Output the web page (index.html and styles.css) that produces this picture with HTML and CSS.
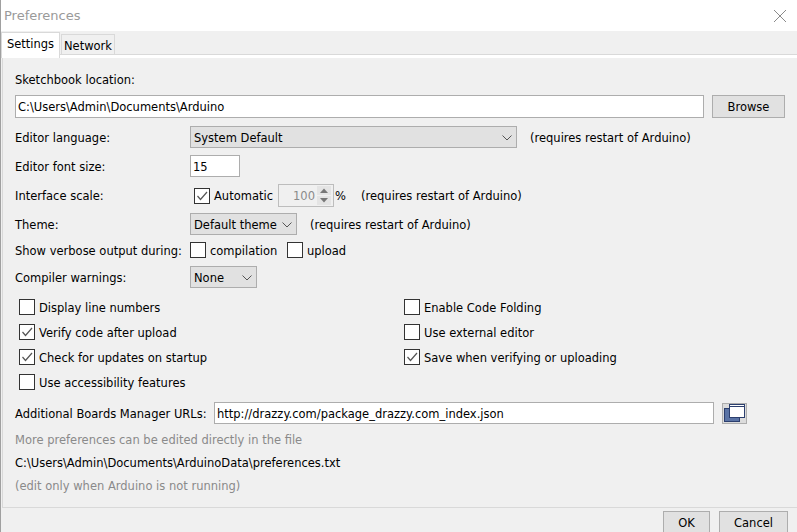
FILE: index.html
```html
<!DOCTYPE html>
<html lang="en">

<head>
  <meta charset="UTF-8">
  <title>Preferences</title>
  <link rel="stylesheet" href="styles.css">
</head>

<body>
  <div class="window">
    <header class="title-bar">
      <span class="title">Preferences</span>
      <svg class="close" width="14" height="14" viewBox="0 0 14 14"><path d="M1 1 13 13M13 1 1 13" stroke="#8a8a8a" fill="none"/></svg>
    </header>

    <nav class="tabs">
      <span class="tab active">Settings</span>
      <span class="tab">Network</span>
    </nav>

    <main class="panel">
      <div class="row row-sketch-label"><span>Sketchbook location:</span></div>

      <div class="row row-sketch">
        <div class="field field-sketch">C:\Users\Admin\Documents\Arduino</div>
        <div class="button button-browse">Browse</div>
      </div>

      <div class="row row-lang">
        <span class="label">Editor language:</span>
        <div class="select select-lang">System Default
          <svg class="chevron" width="10" height="6" viewBox="0 0 10 6"><path d="M.5.5 5 5 9.500.5" stroke="#555" fill="none"/></svg>
        </div>
        <span class="note note-lang">(requires restart of Arduino)</span>
      </div>

      <div class="row row-size">
        <span class="label">Editor font size:</span>
        <div class="field field-size">15</div>
      </div>

      <div class="row row-scale">
        <span class="label">Interface scale:</span>
        <span class="box box-auto"><svg width="14" height="14" viewBox="0 0 14 14"><path d="M2.500 7 5.500 10.500 12 3" stroke="#555" stroke-width="1.200" fill="none"/></svg></span>
        <span class="check-text auto-text">Automatic</span>
        <div class="spinner">
          <span class="spinner-value">100</span>
          <span class="spinner-arrows">
            <svg width="14" height="9" viewBox="0 0 14 9"><rect width="14" height="9" fill="#e4e4e4"/><path d="M3 7 7 2.500 11 7Z" fill="#777"/></svg>
            <svg width="14" height="9" viewBox="0 0 14 9"><rect width="14" height="9" fill="#e4e4e4"/><path d="M3 2 7 6.500 11 2Z" fill="#777"/></svg>
          </span>
        </div>
        <span class="percent">%</span>
        <span class="note">(requires restart of Arduino)</span>
      </div>

      <div class="row row-theme">
        <span class="label">Theme:</span>
        <div class="select select-theme">Default theme
          <svg class="chevron" width="10" height="6" viewBox="0 0 10 6"><path d="M.5.5 5 5 9.500.5" stroke="#555" fill="none"/></svg>
        </div>
        <span class="note note-theme">(requires restart of Arduino)</span>
      </div>

      <div class="row row-verbose">
        <span class="label">Show verbose output during:</span>
        <span class="box"></span>
        <span class="check-text verbose-text">compilation</span>
        <span class="box"></span>
        <span class="check-text">upload</span>
      </div>

      <div class="row row-warn">
        <span class="label">Compiler warnings:</span>
        <div class="select select-warn">None
          <svg class="chevron" width="10" height="6" viewBox="0 0 10 6"><path d="M.5.5 5 5 9.500.5" stroke="#555" fill="none"/></svg>
        </div>
      </div>

      <div class="options">
        <div class="option"><span class="box"></span><span class="check-text">Display line numbers</span></div>
        <div class="option"><span class="box"></span><span class="check-text">Enable Code Folding</span></div>
        <div class="option"><span class="box"><svg width="14" height="14" viewBox="0 0 14 14"><path d="M2.500 7 5.500 10.500 12 3" stroke="#555" stroke-width="1.200" fill="none"/></svg></span><span class="check-text">Verify code after upload</span></div>
        <div class="option"><span class="box"></span><span class="check-text">Use external editor</span></div>
        <div class="option"><span class="box"><svg width="14" height="14" viewBox="0 0 14 14"><path d="M2.500 7 5.500 10.500 12 3" stroke="#555" stroke-width="1.200" fill="none"/></svg></span><span class="check-text">Check for updates on startup</span></div>
        <div class="option"><span class="box"><svg width="14" height="14" viewBox="0 0 14 14"><path d="M2.500 7 5.500 10.500 12 3" stroke="#555" stroke-width="1.200" fill="none"/></svg></span><span class="check-text">Save when verifying or uploading</span></div>
        <div class="option"><span class="box"></span><span class="check-text">Use accessibility features</span></div>
      </div>

      <div class="row row-urls">
        <span class="urls-label">Additional Boards Manager URLs:</span>
        <div class="field field-urls">http://drazzy.com/package_drazzy.com_index.json</div>
        <div class="icon-button">
          <svg width="21" height="18" viewBox="0 0 21 18">
            <rect x=".5" y="4.500" width="15" height="13" fill="#5a73a5" stroke="#2c3f6e"/>
            <rect x="5.500" y=".5" width="15" height="13" fill="#fff" stroke="#2c3f6e"/>
            <path d="M6 2.500H20" stroke="#2c3f6e"/>
          </svg>
        </div>
      </div>

      <p class="hint hint-first">More preferences can be edited directly in the file</p>
      <p class="path">C:\Users\Admin\Documents\ArduinoData\preferences.txt</p>
      <p class="hint hint-last">(edit only when Arduino is not running)</p>
    </main>

    <footer class="actions">
      <div class="button button-ok">OK</div>
      <div class="button button-cancel">Cancel</div>
    </footer>
  </div>
</body>

</html>
```

FILE: styles.css
```css
body {
  margin: 0;
  font-family: "DejaVu Sans", sans-serif;
  font-size: 11.5px;
  color: #000;
  background-color: #f0f0f0;
  overflow: hidden;
  white-space: nowrap;
}

.window {
  height: 532px;
  overflow: hidden;
  border-left: 1px solid #a0a0a0;
  box-sizing: border-box;
}

.title-bar {
  height: 31px;
  background-color: #fff;
  display: flex;
  align-items: center;
  justify-content: space-between;
  padding: 0 10px 0 3px;
}

.title {
  font-size: 13px;
  color: #9a9a9a;
}

.tabs {
  height: 23px;
  display: flex;
  align-items: flex-end;
  border-bottom: 1px solid #d9d9d9;
  box-sizing: content-box;
}

.tab {
  height: 20px;
  line-height: 22px;
  width: 54px;
  margin-left: 1px;
  text-align: center;
  box-sizing: border-box;
  border: 1px solid #d9d9d9;
  border-bottom: none;
  background-color: #f0f0f0;
}

.tab.active {
  width: 59px;
  height: 26px;
  margin-left: 0;
  margin-bottom: -4px;
  line-height: 22px;
  background-color: #fff;
  position: relative;
}

.panel {
  height: 453px;
  box-sizing: border-box;
  margin-left: 1px;
  padding: 15px 0 0 12px;
  border-top: 3px solid #fff;
  border-left: 1px solid #d9d9d9;
  border-bottom: 1px solid #d9d9d9;
}

.row {
  display: flex;
  align-items: center;
}

.row-sketch-label { height: 14px; margin-bottom: 8px; }
.row-sketch { height: 23px; margin-bottom: 8px; }
.row-lang { height: 22px; margin-bottom: 7px; }
.row-size { height: 22px; margin-bottom: 7px; }
.row-scale { height: 23px; margin-bottom: 6px; }
.row-theme { height: 22px; margin-bottom: 7px; }
.row-verbose { height: 16px; margin-bottom: 8px; }
.row-warn { height: 22px; margin-bottom: 11px; }
.row-urls { height: 22px; margin-bottom: 9px; }

.label {
  width: 175px;
  flex-shrink: 0;
  padding-top: 2px;
}

.field {
  height: 100%;
  box-sizing: border-box;
  background-color: #fff;
  border: 1px solid #adadad;
  padding-left: 2px;
  display: flex;
  align-items: center;
}

.field-sketch { width: 689px; }
.field-size { width: 50px; height: 22px; padding-top: 2px; }
.field-urls { width: 500px; padding-top: 2px; }

.button {
  box-sizing: border-box;
  border: 1px solid #adadad;
  background-color: #e1e1e1;
  display: flex;
  align-items: center;
  justify-content: center;
}

.button-browse {
  width: 73px;
  height: 23px;
  margin-left: 8px;
}

.select {
  height: 22px;
  box-sizing: border-box;
  border: 1px solid #adadad;
  background-color: #e1e1e1;
  padding: 2px 4px 0 3px;
  display: flex;
  align-items: center;
  justify-content: space-between;
}

.select-lang { width: 327px; }
.select-theme { width: 107px; }
.select-warn { width: 67px; }

.note { padding-top: 2px; }
.note-lang { margin-left: 13px; }
.note-theme { margin-left: 13px; }

.box {
  width: 16px;
  height: 16px;
  box-sizing: border-box;
  border: 1px solid #333;
  background-color: #fff;
  flex-shrink: 0;
  display: flex;
}

.box-auto { margin-left: 4px; }

.check-text {
  margin-left: 4px;
  padding-top: 2px;
}

.auto-text { width: 60px; margin-right: 4px; }
.verbose-text { width: 73px; margin-right: 4px; }

.row-scale .label,
.row-scale .check-text,
.row-scale .note {
  padding-top: 0;
}

.spinner {
  width: 56px;
  height: 23px;
  box-sizing: border-box;
  border: 1px solid #bdbdbd;
  padding: 2px;
  display: flex;
  align-items: center;
  justify-content: flex-end;
}

.spinner-value {
  color: #8a8a8a;
  margin-right: 2px;
}

.spinner-arrows {
  display: flex;
  flex-direction: column;
  gap: 1px;
}

.spinner-arrows svg {
  display: block;
}

.percent {
  width: 26px;
  margin-left: 1px;
}

.options {
  display: grid;
  grid-template-columns: 385px 1fr;
  row-gap: 9px;
  padding-left: 4px;
  margin-bottom: 12px;
}

.option {
  display: flex;
  align-items: center;
  height: 16px;
}

.urls-label { width: 199px; flex-shrink: 0; padding-top: 2px; }

.icon-button {
  width: 25px;
  height: 21px;
  box-sizing: border-box;
  margin-left: 8px;
  border: 1px solid #adadad;
  background-color: #dcdcdc;
  display: flex;
  align-items: center;
  justify-content: center;
}

.hint, .path {
  margin: 0;
  height: 14px;
  line-height: 14px;
}

.hint { color: #8a8a8a; }
.path { margin-top: 9px; }
.hint-last { margin-top: 9px; }

.actions {
  display: flex;
  justify-content: flex-end;
  gap: 9px;
  padding: 3px 9px 0 0;
}

.button-ok { width: 47px; height: 23px; }
.button-cancel { width: 69px; height: 23px; }
```
